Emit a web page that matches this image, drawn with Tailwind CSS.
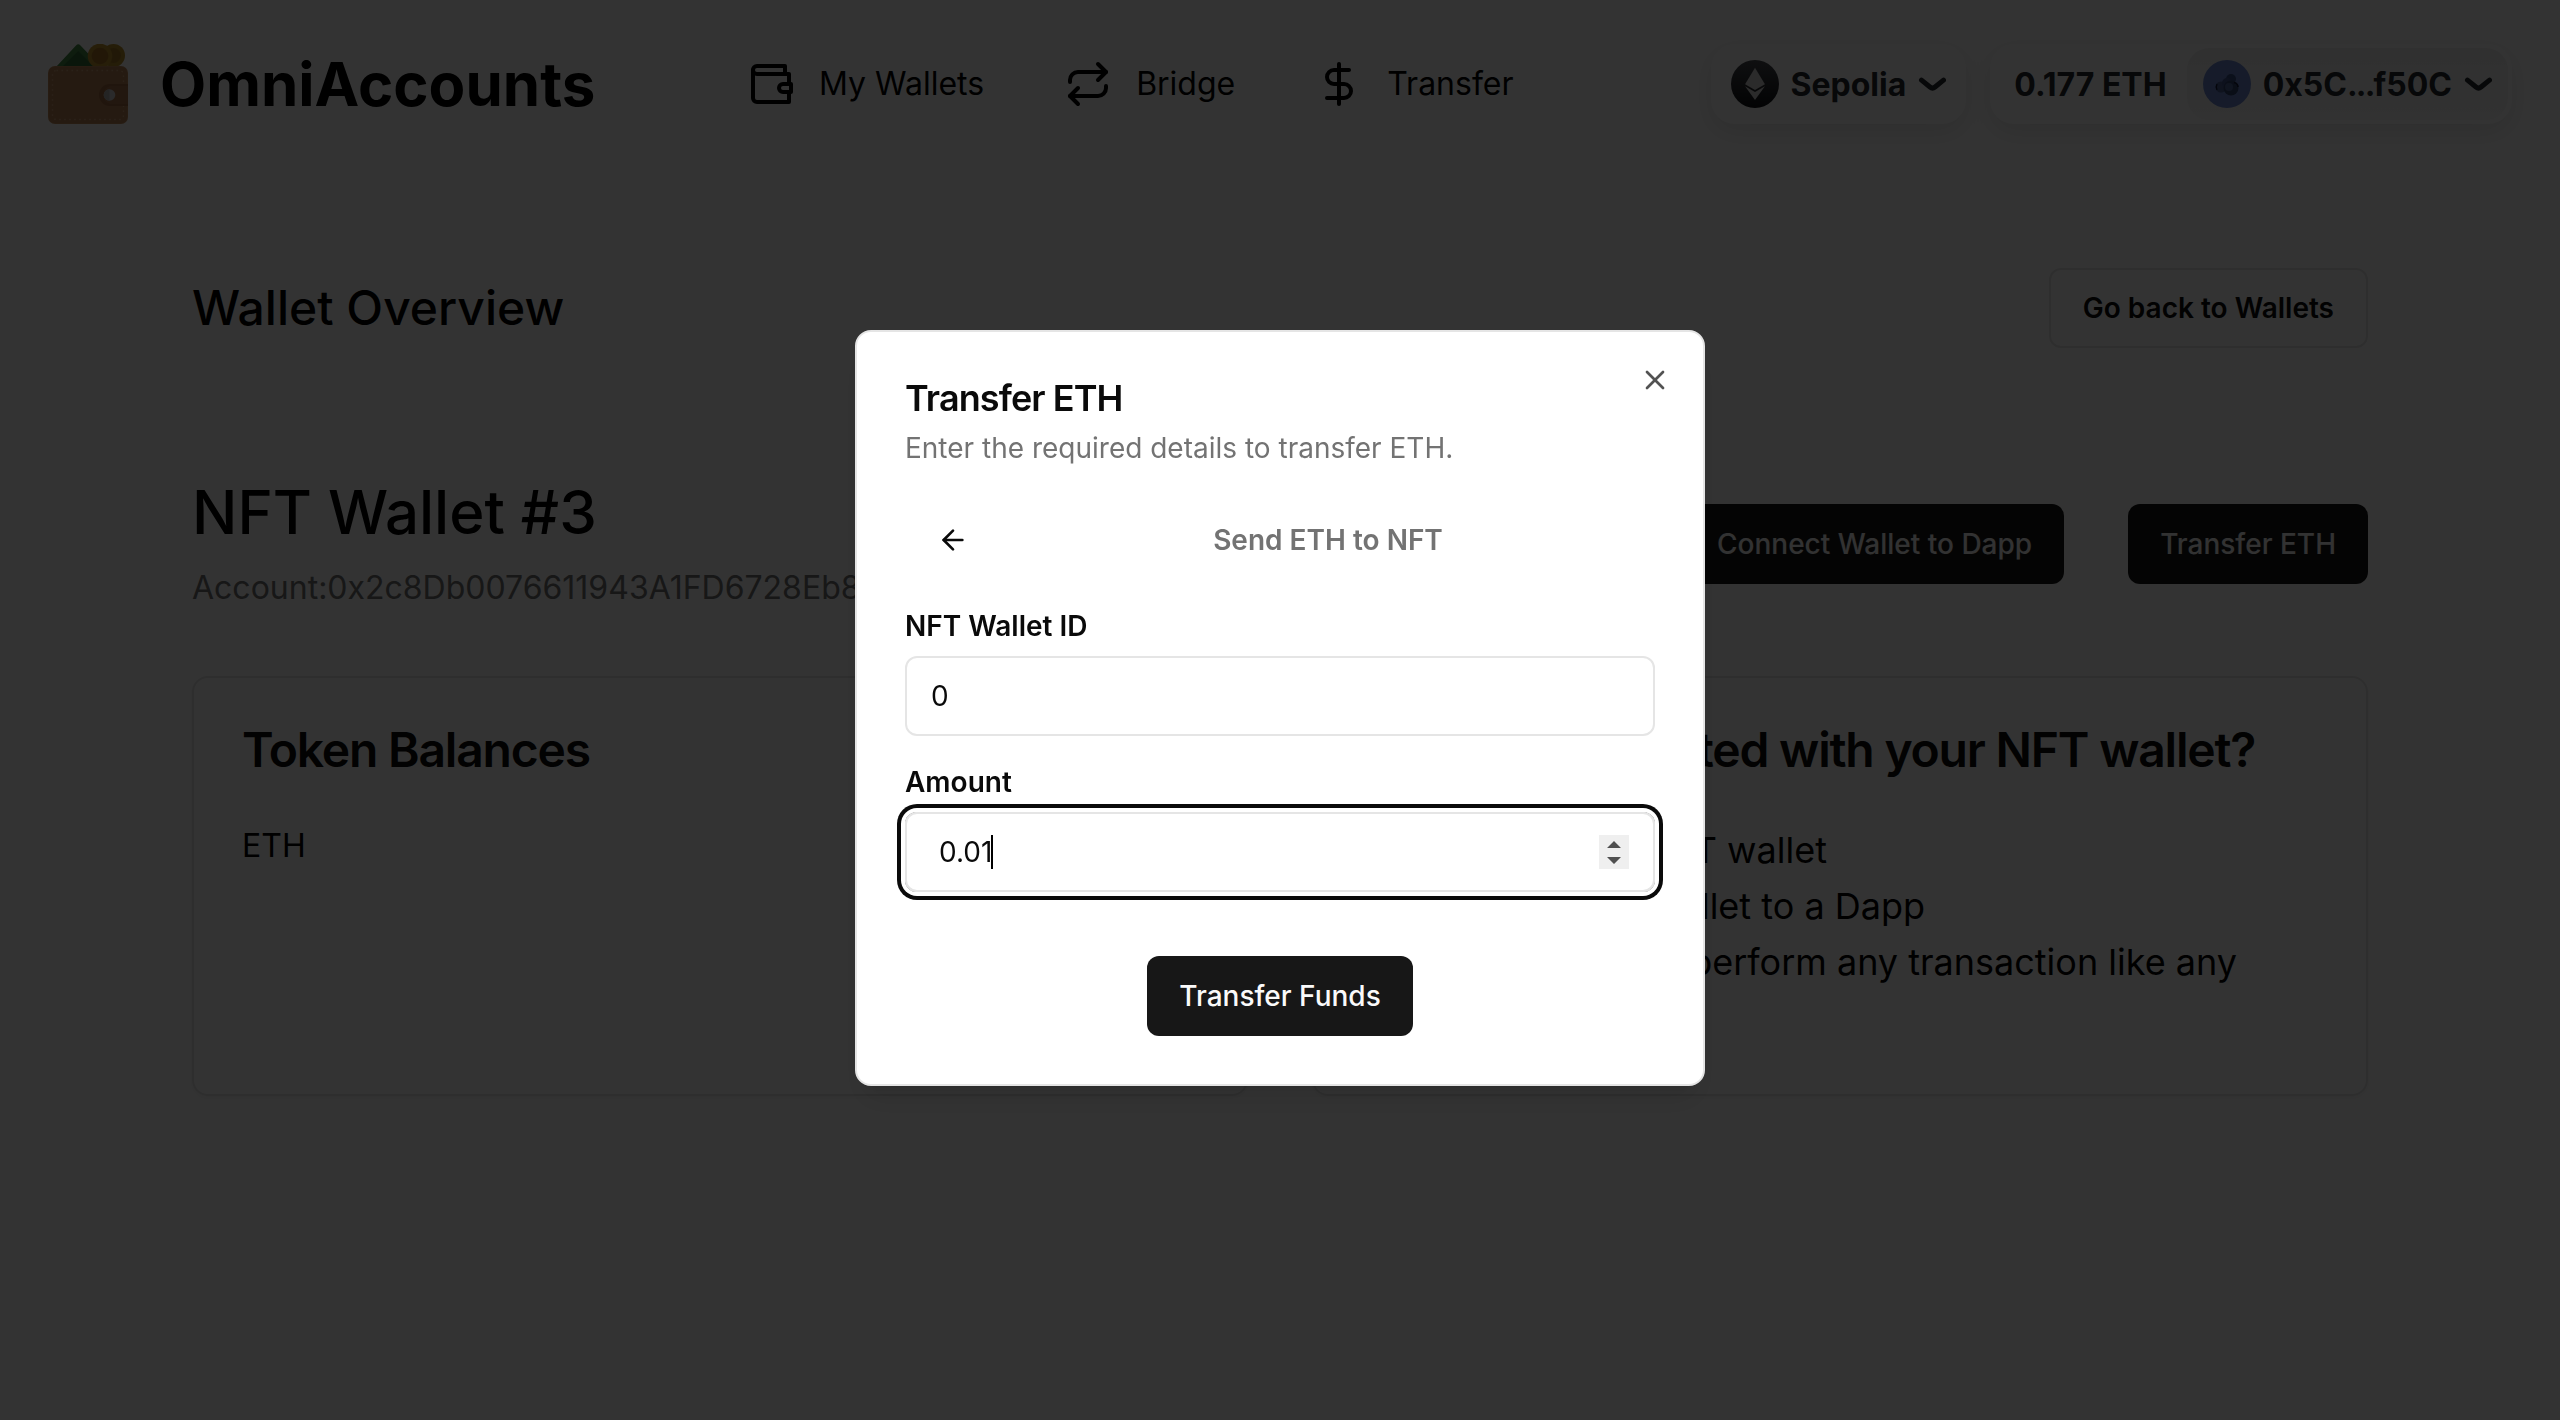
<!DOCTYPE html>
<html lang="en">
<head>
<meta charset="utf-8">
<title>OmniAccounts</title>
<script src="https://cdn.jsdelivr.net/npm/@tailwindcss/browser@4"></script>
</head>
<body class="w-[2560px] h-[1420px] overflow-hidden bg-white text-black font-['Inter',sans-serif]">
<div class="h-[1420px] overflow-hidden">
  <header class="flex items-center h-[168px] px-12">
    <svg class="w-20 h-20 shrink-0" viewBox="0 0 80 80">
      <path d="M8 23L28 1.500Q30.300 -1 32.500 1.500L53 23Z" fill="#468a48"/>
      <path d="M14 23L30.300 7L46 23Z" fill="#33703a"/>
      <circle cx="65.500" cy="11.500" r="11.500" fill="#b88f2c"/>
      <circle cx="65.500" cy="11.500" r="7.500" fill="#a67a24"/>
      <circle cx="52" cy="12" r="12.300" fill="#c0952e"/>
      <circle cx="52" cy="12" r="8.300" fill="#a87426"/>
      <rect x="0" y="22" width="80" height="58" rx="7" fill="#c08a5c"/>
      <rect x="1" y="23" width="78" height="56" rx="6" fill="#b98254"/>
      <rect x="4.500" y="26.500" width="71" height="49" rx="4" fill="none" stroke="#d2a67e" stroke-width="1.400" stroke-dasharray="1.600 3.400"/>
      <path d="M80 40H62a11 11 0 0 0 0 22H80Z" fill="#a06840"/>
      <path d="M80 42H62a9.500 9.500 0 0 0 0 18H80Z" fill="#ac744b"/>
      <circle cx="61.500" cy="51" r="5.800" fill="#d0d0d4"/>
      <path d="M61.500 45.200a5.800 5.800 0 0 0 0 11.600Z" fill="#b2b2b6"/>
    </svg>
    <div class="ml-8 w-[587px] text-[60px] leading-[72px] font-bold">OmniAccounts</div>
    <nav class="flex items-center gap-20 text-[32px] leading-[48px]">
      <a class="flex items-center gap-6 whitespace-nowrap">
        <svg class="size-12" viewBox="0 0 24 24" fill="none" stroke="#000" stroke-width="2" stroke-linecap="round" stroke-linejoin="round"><path d="M21 12V7H5a2 2 0 0 1 0-4h14v4"/><path d="M3 5v14a2 2 0 0 0 2 2h16v-5"/><path d="M18 12a2 2 0 0 0 0 4h4v-4Z"/></svg>
        My Wallets
      </a>
      <a class="flex items-center gap-6 whitespace-nowrap">
        <svg class="size-12" viewBox="0 0 24 24" fill="none" stroke="#000" stroke-width="2" stroke-linecap="round" stroke-linejoin="round"><path d="m17 2 4 4-4 4"/><path d="M3 11v-1a4 4 0 0 1 4-4h14"/><path d="m7 22-4-4 4-4"/><path d="M21 13v1a4 4 0 0 1-4 4H3"/></svg>
        Bridge
      </a>
      <a class="flex items-center gap-6 whitespace-nowrap">
        <svg class="size-12" viewBox="0 0 24 24" fill="none" stroke="#000" stroke-width="2" stroke-linecap="round" stroke-linejoin="round"><path d="M12 2v20"/><path d="M17 5H9.500a3.500 3.500 0 0 0 0 7h5a3.500 3.500 0 0 1 0 7H6"/></svg>
        Transfer
      </a>
    </nav>
    <div class="ml-auto flex gap-6 text-[32px] leading-[48px] font-bold text-[#25292e] whitespace-nowrap">
      <button class="flex items-center gap-3 h-20 px-5 rounded-3xl bg-white shadow-[0_8px_24px_rgba(0,0,0,0.1)]">
        <svg class="size-12" viewBox="0 0 28 28">
          <defs><linearGradient id="eth" x1="0" y1="0" x2="0" y2="1"><stop offset="0" stop-color="#4a4d52"/><stop offset="1" stop-color="#0e1014"/></linearGradient></defs>
          <circle cx="14" cy="14" r="14" fill="url(#eth)"/>
          <path d="M14 4.500L8.200 14.100L14 17.500L19.800 14.100Z" fill="#d4d4d4"/>
          <path d="M8.200 15.300L14 18.700L19.800 15.300L14 23.300Z" fill="#d4d4d4"/>
        </svg>
        <span class="pt-0.5">Sepolia</span>
        <svg class="w-7 h-3.5" viewBox="0 0 14 7" fill="none"><path d="M12.75 1.540L8.516 5.004C7.780 5.607 6.720 5.607 5.984 5.004L1.750 1.540" stroke="#25292e" stroke-width="2.500" stroke-linecap="round" stroke-linejoin="round"/></svg>
      </button>
      <button class="flex items-center h-20 pr-1 rounded-3xl bg-white shadow-[0_8px_24px_rgba(0,0,0,0.1)]">
        <span class="pl-6 pr-5 pt-0.5">0.177 ETH</span>
        <span class="flex items-center gap-3 h-[72px] px-4 rounded-[22px] bg-linear-to-t from-black/3 to-black/6">
          <svg class="size-12" viewBox="0 0 48 48">
            <circle cx="24" cy="24" r="24" fill="#6e88d0"/>
            <circle cx="28" cy="19" r="5" fill="#3b4f85"/>
            <circle cx="18" cy="27" r="5.500" fill="#4a5f96"/>
            <circle cx="24" cy="23" r="5" fill="#425690"/>
            <circle cx="28" cy="28" r="7.500" fill="#354775"/>
            <circle cx="26" cy="27" r="4" fill="#5268a0"/>
            <path d="M31 22.500q4 1 4 4.500" stroke="#151c38" stroke-width="1.600" fill="none"/>
            <path d="M14 24q-1.500 3 0 6" stroke="#151c38" stroke-width="1.400" fill="none"/>
          </svg>
          <span class="pt-0.5">0x5C<span class="tracking-[-1.8px]">...</span>f50C</span>
          <svg class="w-7 h-3.5" viewBox="0 0 14 7" fill="none"><path d="M12.75 1.540L8.516 5.004C7.780 5.607 6.720 5.607 5.984 5.004L1.750 1.540" stroke="#25292e" stroke-width="2.500" stroke-linecap="round" stroke-linejoin="round"/></svg>
        </span>
      </button>
    </div>
  </header>

  <main class="px-48 pt-[100px]">
    <div class="flex items-center justify-between h-20">
      <h1 class="text-5xl font-medium">Wallet Overview</h1>
      <button class="h-20 px-8 rounded-xl border-2 border-neutral-200 text-[28px] font-semibold text-[#0a0a0a]">Go back to Wallets</button>
    </div>
    <div class="mt-32 flex items-center justify-between">
      <div class="flex flex-col gap-4">
        <h2 class="text-[60px] leading-[72px] font-medium">NFT Wallet #3</h2>
        <p class="text-[32px] leading-[48px] text-neutral-500">Account:0x2c8Db0076611943A1FD6728Eb8</p>
      </div>
      <div class="flex gap-16 text-[28px] font-medium text-neutral-50">
        <button class="h-20 px-8 rounded-xl bg-neutral-900">Connect Wallet to Dapp</button>
        <button class="h-20 px-8 rounded-xl bg-neutral-900">Transfer ETH</button>
      </div>
    </div>
    <div class="mt-16 grid grid-cols-2 gap-16 h-[420px]">
      <section class="rounded-2xl border-2 border-neutral-200 p-12 shadow-[0_2px_4px_rgba(0,0,0,0.05)]">
        <h3 class="text-5xl leading-none font-semibold tracking-tight text-[#0a0a0a]">Token Balances</h3>
        <p class="mt-12 text-[32px] leading-[48px]">ETH</p>
      </section>
      <section class="rounded-2xl border-2 border-neutral-200 p-12 shadow-[0_2px_4px_rgba(0,0,0,0.05)]">
        <h3 class="text-5xl leading-none font-semibold tracking-tight text-[#0a0a0a] whitespace-nowrap">How to get started with your NFT wallet?</h3>
        <ul class="mt-12 text-4xl leading-[56px] whitespace-nowrap">
          <li class="w-[465px] text-right">Fund your NFT wallet</li>
          <li class="w-[563px] text-right">Connect wallet to a Dapp</li>
          <li class="w-[875px] text-right">You can perform any transaction like any</li>
          <li>other wallet</li>
        </ul>
      </section>
    </div>
  </main>
</div>

<div class="fixed inset-0 flex items-center justify-center bg-black/80">
  <div role="dialog" class="relative flex flex-col gap-8 w-[850px] h-[756px] -translate-y-0.5 rounded-2xl border-2 border-neutral-200 bg-white p-12 text-[28px] text-[#0a0a0a] shadow-[0_20px_30px_-6px_rgba(0,0,0,0.1),0_8px_12px_-8px_rgba(0,0,0,0.1)]">
    <div class="flex flex-col gap-3">
      <h2 class="text-4xl leading-none font-semibold tracking-tight">Transfer ETH</h2>
      <p class="leading-10 text-neutral-500">Enter the required details to transfer ETH.</p>
    </div>
    <div class="flex items-center h-20">
      <button class="flex items-center justify-center w-24 h-20"><svg class="size-8" viewBox="0 0 24 24" fill="none" stroke="#0a0a0a" stroke-width="2" stroke-linecap="round" stroke-linejoin="round"><path d="m12 19-7-7 7-7"/><path d="M19 12H5"/></svg></button>
      <p class="flex-1 text-center font-semibold text-neutral-500">Send ETH to NFT</p>
    </div>
    <div class="flex flex-col gap-4">
      <label class="leading-none font-semibold">NFT Wallet ID</label>
      <div class="flex items-center h-20 px-6 rounded-xl border-2 border-neutral-200">0</div>
    </div>
    <div class="flex flex-col gap-4">
      <label class="leading-none font-semibold">Amount</label>
      <div class="flex items-center h-20 pl-8 pr-6 rounded-xl border-2 border-neutral-200 ring-4 ring-[#0a0a0a] ring-offset-4 ring-offset-white">
        <span>0.01</span><span class="-ml-px w-0.5 h-[34px] bg-black"></span>
        <svg class="ml-auto w-[30px] h-[34px]" viewBox="0 0 30 34"><path d="M0 0H30V34H0Z" fill="#efefef"/><path d="M15 6L22 13H8ZM15 29L8 22H22Z" fill="#505050"/></svg>
      </div>
    </div>
    <button class="mt-8 self-center h-20 px-8 shrink-0 rounded-xl bg-neutral-900 font-medium text-neutral-50">Transfer Funds</button>
    <svg class="absolute top-8 right-8 size-8 opacity-70" viewBox="0 0 24 24" fill="none" stroke="#0a0a0a" stroke-width="2" stroke-linecap="round" stroke-linejoin="round"><path d="M18 6 6 18"/><path d="m6 6 12 12"/></svg>
  </div>
</div>
</body>
</html>
